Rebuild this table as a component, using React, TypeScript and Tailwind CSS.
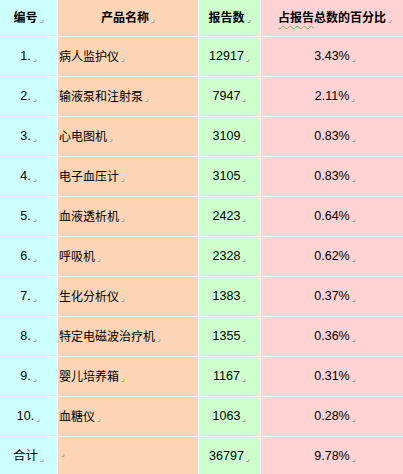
const rows = [
  { no: "1.", name: "病人监护仪", count: "12917", pct: "3.43%" },
  { no: "2.", name: "输液泵和注射泵", count: "7947", pct: "2.11%" },
  { no: "3.", name: "心电图机", count: "3109", pct: "0.83%" },
  { no: "4.", name: "电子血压计", count: "3105", pct: "0.83%" },
  { no: "5.", name: "血液透析机", count: "2423", pct: "0.64%" },
  { no: "6.", name: "呼吸机", count: "2328", pct: "0.62%" },
  { no: "7.", name: "生化分析仪", count: "1383", pct: "0.37%" },
  { no: "8.", name: "特定电磁波治疗机", count: "1355", pct: "0.36%" },
  { no: "9.", name: "婴儿培养箱", count: "1167", pct: "0.31%" },
  { no: "10.", name: "血糖仪", count: "1063", pct: "0.28%" },
  { no: "合计", name: "", count: "36797", pct: "9.78%" },
];

// word-style paragraph mark
function Mark() {
  return (
    <svg width="4" height="4" viewBox="0 0 4 4" className="ml-[2px] inline-block self-end mb-[4px]">
      <path d="M0.5 3.5H3V1" stroke="#a6a6a6" strokeWidth="1" fill="none" />
    </svg>
  );
}

function Cell({
  children,
  className,
}: {
  children?: React.ReactNode;
  className: string;
}) {
  return (
    <div className={`flex items-center ${className}`}>
      <span className="flex items-center">
        {children}
        <Mark />
      </span>
    </div>
  );
}

export default function App() {
  return (
    <div
      className="h-[474px] w-[403px] overflow-hidden bg-white text-[12px] text-black"
      style={{ fontFamily: '"Liberation Sans", "Noto Sans CJK SC", sans-serif' }}
    >
      <div className="grid grid-cols-[57px_140px_61px_142px] gap-px">
        <Cell className="h-[36px] justify-center bg-[#ccffff] font-bold">编号</Cell>
        <Cell className="h-[36px] justify-center bg-[#fbd5b5] font-bold">产品名称</Cell>
        <Cell className="h-[36px] justify-center bg-[#ccffcc] font-bold">报告数</Cell>
        <Cell className="h-[36px] justify-center bg-[#ffd3d3] pl-[6px] font-bold">
          <span className="underline decoration-wavy decoration-[#5cb85c] decoration-1 underline-offset-[3px]">
            占报告
          </span>
          总数的百分比
        </Cell>
        {rows.map((r) => (
          <>
            <Cell key={r.no + "a"} className="h-[39px] justify-center bg-[#ccffff] text-[12.5px]">
              {r.no}
            </Cell>
            <Cell key={r.no + "b"} className="h-[39px] bg-[#fbd5b5] pl-[1px]">
              {r.name}
            </Cell>
            <Cell key={r.no + "c"} className="h-[39px] justify-center bg-[#ccffcc] text-[12.5px]">
              {r.count}
            </Cell>
            <Cell key={r.no + "d"} className="h-[39px] justify-center bg-[#ffd3d3] pl-[6px] text-[12.5px]">
              {r.pct}
            </Cell>
          </>
        ))}
      </div>
    </div>
  );
}
